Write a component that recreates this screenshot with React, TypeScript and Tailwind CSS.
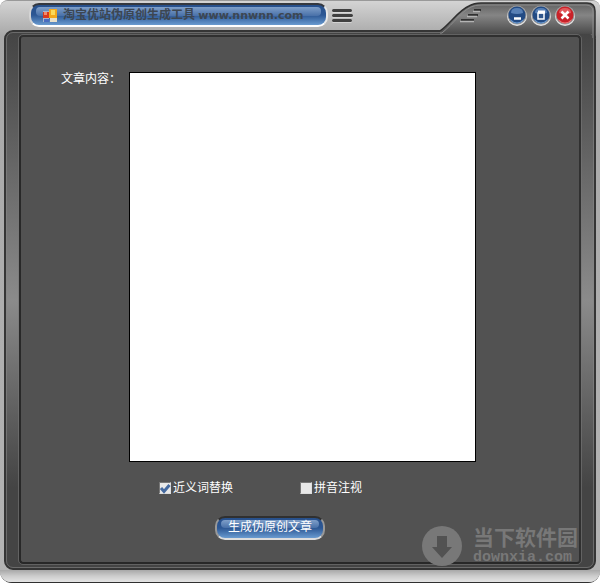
import { useState } from "react";

const FONT = "font-['Liberation_Sans','Noto_Sans_CJK_SC',sans-serif]";

function AppIcon() {
  return (
    <svg width="14" height="14" viewBox="0 0 14 14" className="shrink-0" aria-hidden="true">
      <rect x="0" y="2" width="6" height="11" fill="#a9b4cc" />
      <rect x="0" y="3" width="6" height="6" fill="#d8391f" />
      <rect x="1" y="3" width="3" height="3" fill="#f08a6c" />
      <rect x="6" y="0" width="8" height="9" fill="#f3a81c" />
      <rect x="8" y="1" width="4" height="5" fill="#fbd95a" />
      <rect x="1" y="10" width="5" height="3" fill="#4a6cc0" />
      <rect x="7" y="9" width="7" height="4" fill="#e8dfc8" />
    </svg>
  );
}

function TitleBar() {
  return (
    <header className="flex h-[29px] items-start justify-between pl-[29px] pr-1">
      <div className="flex items-center gap-1 pt-[2px]">
        <div className="relative flex h-6 w-[299px] items-start rounded-[10px] border-2 border-t-[#35383e] border-r-[#e8e8e8] border-b-white border-l-[#d4d4d4] bg-linear-to-b from-[#27508c] from-5% via-[#2c5794] via-50% to-[#6a9bd0] pl-3 pt-px">
          <span className="absolute inset-x-[5px] top-[2px] h-[9px] rounded-sm bg-linear-to-b from-[#7f9fc9] to-[#4870a8]" />
          <h1 className="relative flex items-center gap-[6px] whitespace-nowrap text-[12px] leading-[18px] font-bold text-[#3c4652]">
            <AppIcon />
            <span>
              淘宝优站伪原创生成工具{" "}
              <span className="font-['DejaVu_Sans',sans-serif] text-[11px]">www.nnwnn.com</span>
            </span>
          </h1>
        </div>
        <button type="button" aria-label="菜单" className="flex">
          <svg width="22" height="16" viewBox="0 0 22 16" fill="none" strokeLinecap="round">
            <path d="M1 4.500h18M1 9.500h19M1 14.500h18" stroke="#eeeeee" strokeWidth="2" />
            <path d="M1.500 3.500h17M1.500 8.500h18M1.500 13.500h17" stroke="#404040" strokeWidth="3" />
          </svg>
        </button>
      </div>

      <div className="relative z-10 flex h-[32px] w-[156px] items-start justify-end gap-[2px] pt-[2px] pr-5">
        <svg className="absolute top-px left-0" width="156" height="36" viewBox="0 0 156 36" aria-hidden="true">
          <defs>
            <linearGradient id="tab" x1="0" x2="0" y1="0" y2="1">
              <stop offset="0" stopColor="#606060" />
              <stop offset="0.35" stopColor="#858585" />
              <stop offset="0.9" stopColor="#484848" />
            </linearGradient>
          </defs>
          <path d="M0 29C10 22 19 8 29 4Q34 1 41 1H147Q155 1 155 9V36H152V32H0Z" fill="url(#tab)" />
          <path d="M0 29C10 22 19 8 29 4Q34 1 41 1H147Q155 1 155 9V36" fill="none" stroke="#303030" strokeWidth="1.500" />
          <path d="M0 31H2C14 21 21 10 31 5Q35 3 42 3H146Q153 3 153 10V36" fill="none" stroke="#8c8c8c" />
          <g stroke="#303030" strokeWidth="2">
            <path d="M34 8h7M28 13h10M21 18h13" />
          </g>
          <g stroke="#b4b4b4" strokeWidth="1.500">
            <path d="M33 9.500h7M27 14.500h10M20 19.500h14" />
          </g>
        </svg>
        <WindowButton kind="minimize" />
        <WindowButton kind="maximize" />
        <WindowButton kind="close" />
      </div>
    </header>
  );
}

function WindowButton({ kind }: { kind: "minimize" | "maximize" | "close" }) {
  const names = { minimize: "最小化", maximize: "最大化", close: "关闭" };
  const isClose = kind === "close";

  return (
    <button type="button" aria-label={names[kind]} className="relative flex cursor-pointer">
      <svg width="22" height="24" viewBox="0 0 22 24" fill="none">
        <circle cx="11" cy="13" r="10" fill="#e4e4e4" />
        <circle cx="11" cy="12" r="9.500" fill="#9a9a9a" />
        <circle cx="11" cy="12" r="8.500" fill={isClose ? "#c92229" : "#234b84"} />
        <path d="M4 16Q11 23 18 16Q16 20 11 20.500Q6 20 4 16Z" fill={isClose ? "#f37c7c" : "#75a5db"} />
        <path d="M5 10Q5 5 11 5T17 10Q11 12 5 10Z" fill={isClose ? "#e25b5e" : "#5880b5"} />
        {kind === "minimize" && <path d="M8 15.500h7" stroke="#ffffff" strokeWidth="2.500" />}
        {kind === "maximize" && (
          <>
            <rect x="8" y="10" width="6" height="6" fill="#31578c" stroke="#ffffff" strokeWidth="1.500" />
            <path d="M8 9h7" stroke="#ffffff" strokeWidth="3" />
          </>
        )}
        {isClose && <path d="M7.500 8.500l7 7M14.500 8.500l-7 7" stroke="#ffffff" strokeWidth="2.500" />}
      </svg>
    </button>
  );
}

interface OptionProps {
  id: string;
  label: string;
  checked: boolean;
  onChange: (value: boolean) => void;
}

function Option({ id, label, checked, onChange }: OptionProps) {
  return (
    <label htmlFor={id} className="flex items-center gap-[2px] text-[12px] leading-4 text-white">
      <span className="relative flex">
        <input
          id={id}
          type="checkbox"
          checked={checked}
          onChange={(e) => onChange(e.target.checked)}
          className="size-3 appearance-none border border-t-[#777777] border-l-[#777777] border-r-[#dddddd] border-b-[#dddddd] bg-[#e8e8e8]"
        />
        {checked && (
          <svg className="pointer-events-none absolute inset-0" width="12" height="12" viewBox="0 0 12 12" fill="none">
            <path d="M2 6l3 3.500L10.500 3" stroke="#44699f" strokeWidth="3" />
          </svg>
        )}
      </span>
      {label}
    </label>
  );
}

function Watermark() {
  return (
    <div className="pointer-events-none absolute right-px bottom-[-5px] flex items-center gap-[10px] text-[#787878]">
      <svg width="42" height="42" viewBox="0 0 42 42" aria-hidden="true">
        <circle cx="21" cy="21" r="20" fill="#787878" />
        <path d="M16 11h10v11h5L21 33 11 22h5Z" fill="#525252" />
      </svg>
      <div className="flex flex-col">
        <span className="text-[21px] leading-[24px] font-bold">当下软件园</span>
        <span className="font-['Liberation_Mono',monospace] text-[15px] leading-4 font-bold">downxia.com</span>
      </div>
    </div>
  );
}

export default function App() {
  const [text, setText] = useState("");
  const [synonyms, setSynonyms] = useState(true);
  const [pinyin, setPinyin] = useState(false);

  return (
    <div className={`flex min-h-screen flex-col rounded-t-lg rounded-b-xl border-t border-b border-t-[#999999] border-b-[#303030] bg-[#b0b0b0] ${FONT}`}>
      <div className="flex flex-1 flex-col rounded-t-[7px] rounded-b-[11px] bg-linear-to-b from-[#d4d4d4] from-0% via-[#a8a8a8] via-6% to-[#b4b4b4]">
        <TitleBar />
        <main className="mx-1 flex flex-1 flex-col rounded-[9px] border-2 border-[#353535] bg-linear-to-b from-[#444444] via-[#8b8b8b] to-[#444444] to-85%">
          <div className="flex flex-1 flex-col rounded-[7px] border border-[#858585]/60 px-3 pt-[2px] pb-[3px]">
            <div className="relative flex flex-1 flex-col rounded-[4px] border-2 border-t-[#303030] border-r-[#303030] border-b-[#282828] border-l-[#282828] bg-[#525252] pt-[35px] pb-4 outline outline-[#777777]/60">
              <form onSubmit={(e) => e.preventDefault()}>
                <div className="flex pr-[103px] pl-10">
                  <label htmlFor="content" className="w-[68px] shrink-0 text-[12px] leading-[14px] text-white">
                    文章内容：
                  </label>
                  <textarea
                    id="content"
                    value={text}
                    onChange={(e) => setText(e.target.value)}
                    className="h-[390px] min-w-0 flex-1 resize-none border border-black bg-white p-1 text-[12px] text-black outline-none"
                  />
                </div>
                <div className="mt-[18px] flex gap-[67px] pl-[138px]">
                  <Option id="synonyms" label="近义词替换" checked={synonyms} onChange={setSynonyms} />
                  <Option id="pinyin" label="拼音注视" checked={pinyin} onChange={setPinyin} />
                </div>
                <div className="mt-5 pl-[194px]">
                  <button
                    type="submit"
                    className="relative flex h-6 w-[110px] cursor-pointer justify-center rounded-[10px] border-2 border-t-[#303030] border-r-[#999999] border-b-[#dddddd] border-l-[#999999] bg-linear-to-b from-[#27508c] via-[#2c5794] to-[#6a9bd0] text-[12px] leading-[18px] text-white"
                  >
                    <span className="absolute inset-x-1 top-[2px] h-2 rounded-sm bg-linear-to-b from-[#7f9fc9] to-[#4870a8]" />
                    <span className="relative">生成伪原创文章</span>
                  </button>
                </div>
              </form>
              <Watermark />
            </div>
          </div>
        </main>
        <div className="h-3 shrink-0 rounded-b-[11px] bg-linear-to-b from-[#a8a8a8] via-[#cccccc] to-[#e4e4e4]" />
      </div>
    </div>
  );
}
